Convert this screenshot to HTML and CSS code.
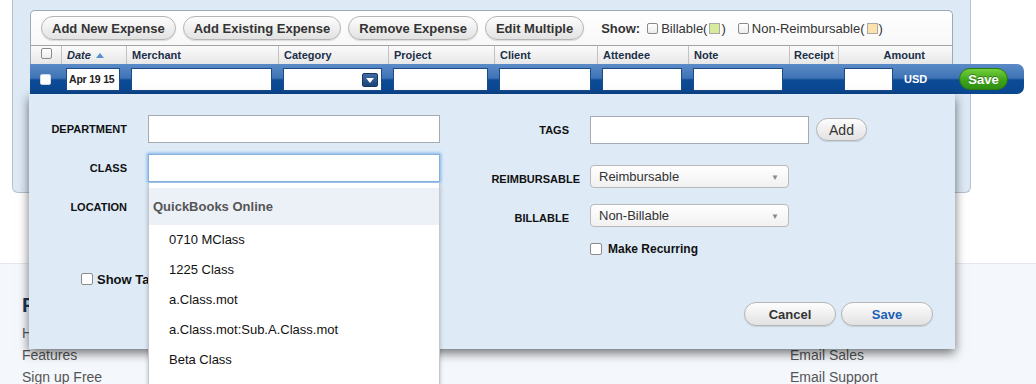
FILE: index.html
```html
<!DOCTYPE html>
<html lang="en">
<head>
  <meta charset="UTF-8">
  <title>Expense Report</title>
  <link rel="stylesheet" href="styles.css">
</head>
<body>

<div class="page">
  <div class="expense-panel">
    <div class="grid-box">
      <div class="toolbar">
        <button class="pill">Add New Expense</button>
        <button class="pill">Add Existing Expense</button>
        <button class="pill">Remove Expense</button>
        <button class="pill">Edit Multiple</button>
        <div class="show-filters">
          <span class="show-label">Show:</span>
          <span class="filter"><span class="cb"></span>Billable(<span class="swatch billable"></span>)</span>
          <span class="filter"><span class="cb"></span>Non-Reimbursable(<span class="swatch non-reimb"></span>)</span>
        </div>
      </div>

      <div class="head-row">
        <div class="hcell check"><span class="cb"></span></div>
        <div class="hcell"><em>Date</em><span class="sort-up"></span></div>
        <div class="hcell">Merchant</div>
        <div class="hcell">Category</div>
        <div class="hcell">Project</div>
        <div class="hcell">Client</div>
        <div class="hcell">Attendee</div>
        <div class="hcell">Note</div>
        <div class="hcell receipt">Receipt</div>
        <div class="hcell amount">Amount</div>
      </div>

      <div class="edit-row">
        <div class="ecell check"><span class="cb white"></span></div>
        <div class="ecell"><span class="row-input date">Apr 19 15</span></div>
        <div class="ecell"><span class="row-input"></span></div>
        <div class="ecell"><span class="row-input select"><span class="drop-btn"></span></span></div>
        <div class="ecell"><span class="row-input"></span></div>
        <div class="ecell"><span class="row-input"></span></div>
        <div class="ecell"><span class="row-input"></span></div>
        <div class="ecell"><span class="row-input"></span></div>
        <div class="ecell"></div>
        <div class="ecell amount-cell"><span class="row-input amount-input"></span><span class="currency">USD</span></div>
        <div class="ecell save-cell"><button class="green-save">Save</button></div>
      </div>
    </div>
  </div>

  <div class="site-footer">
    <div class="footer-col">
      <h3>Find Out More</h3>
      <a href="#">How It Works</a>
      <a href="#">Features</a>
      <a href="#">Sign up Free</a>
    </div>
    <div class="footer-col contact">
      <a href="#">Email Sales</a>
      <a href="#">Email Support</a>
    </div>
  </div>

  <div class="modal">
    <div class="modal-body">
      <div class="form-col left-col">
        <label class="field-label">DEPARTMENT</label>
        <span class="text-input"></span>
        <label class="field-label">CLASS</label>
        <span class="text-input focused"></span>
        <label class="field-label">LOCATION</label>
        <span class="text-input"></span>
        <span class="show-tags"><span class="cb"></span>Show Tags</span>
      </div>

      <div class="form-col right-col">
        <label class="field-label tall">TAGS</label>
        <div class="tag-field">
          <span class="text-input tags"></span>
          <button class="pill add-btn">Add</button>
        </div>
        <label class="field-label low wide">REIMBURSABLE</label>
        <div class="select-box">Reimbursable<span class="caret">&#9660;</span></div>
        <label class="field-label low">BILLABLE</label>
        <div class="select-box">Non-Billable<span class="caret">&#9660;</span></div>
        <span></span>
        <span class="recurring"><span class="cb"></span>Make Recurring</span>
      </div>
    </div>

    <div class="modal-actions">
      <button class="pill wide-btn">Cancel</button>
      <button class="pill wide-btn blue-text">Save</button>
    </div>

    <!-- class suggestions -->
    <div class="suggest">
      <div class="suggest-group">QuickBooks Online</div>
      <div class="suggest-item">0710 MClass</div>
      <div class="suggest-item">1225 Class</div>
      <div class="suggest-item">a.Class.mot</div>
      <div class="suggest-item">a.Class.mot:Sub.A.Class.mot</div>
      <div class="suggest-item">Beta Class</div>
    </div>
  </div>
</div>

</body>
</html>
```

FILE: styles.css
```css
body {
  margin: 0;
  font-family: "Liberation Sans", Arial, sans-serif;
  background: #fff;
  overflow: hidden;
}
.page {
  position: relative;
  height: 384px;
  overflow: hidden;
}

/* top panel */
.expense-panel {
  margin-left: 12px;
  width: 957px;
  height: 182px;
  padding-top: 10px;
  background: #dde9f5;
  border: 1px solid #b3c2d1;
  border-top: none;
  border-radius: 0 0 6px 6px;
}
.grid-box {
  margin-left: 17px;
  width: 921px;
  border: 1px solid #9ea9b5;
  border-bottom: none;
  border-radius: 5px 5px 0 0;
  background: linear-gradient(#ffffff, #ededed);
}
.toolbar {
  display: flex;
  align-items: center;
  height: 34px;
  padding: 0 0 0 10px;
  gap: 7px;
  box-sizing: border-box;
}
.pill {
  height: 24px;
  padding: 0 10px;
  font-family: "Liberation Sans", Arial, sans-serif;
  font-weight: bold;
  font-size: 13px;
  color: #333;
  background: linear-gradient(#fdfdfd, #e2e2e2);
  border: 1px solid #b5b5b5;
  border-radius: 12px;
  box-shadow: 0 1px 1px rgba(0,0,0,0.12);
}
.show-filters {
  display: flex;
  align-items: center;
  margin-left: 10px;
  font-size: 13px;
  color: #333;
}
.show-label {
  font-weight: bold;
  margin-right: 7px;
}
.filter {
  display: flex;
  align-items: center;
  margin-right: 12px;
}
.filter .cb {
  margin-right: 3px;
}
.cb {
  display: inline-block;
  width: 9px;
  height: 9px;
  border: 1px solid #8a8a8a;
  border-radius: 2px;
  background: linear-gradient(#fff, #ececec);
}
.cb.white {
  border-color: #d0d8e2;
  background: #fff;
}
.swatch {
  display: inline-block;
  width: 9px;
  height: 9px;
  margin: 0 1px 0 2px;
  border: 1px solid #a9a9a9;
}
.swatch.billable {
  background: #d6eb9c;
}
.swatch.non-reimb {
  background: #fde2ad;
}

/* column header */
.head-row,
.edit-row {
  display: grid;
}
.head-row {
  grid-template-columns: 30px 65px 152px 110px 106px 103px 91px 101px 49px 114px;
  height: 18px;
  border-top: 1px solid #a3a3a3;
  background: linear-gradient(#fbfbfb, #e7e7e7);
}
.hcell {
  display: flex;
  align-items: center;
  padding-left: 5px;
  border-left: 1px solid #c2c2c2;
  font-size: 11px;
  font-weight: bold;
  color: #1c2f48;
}
.hcell:first-child {
  border-left: none;
}
.hcell.check {
  justify-content: center;
  padding: 0;
  align-items: flex-start;
  padding-top: 2px;
}
.hcell.receipt {
  padding-left: 4px;
}
.hcell.amount {
  justify-content: flex-end;
  padding-right: 27px;
}
.sort-up {
  width: 0;
  height: 0;
  margin-left: 5px;
  border-left: 4px solid transparent;
  border-right: 4px solid transparent;
  border-bottom: 5px solid #5a8fd1;
}

/* editable row */
.edit-row {
  grid-template-columns: 31px 65px 152px 110px 106px 103px 91px 101px 49px 115px 71px;
  width: 994px;
  height: 30px;
  margin-left: -1px;
  background: linear-gradient(#5b8bc7, #3f73b5 47%, #0e4b97 53%, #0a4791);
  border-radius: 0 7px 7px 0;
}
.ecell {
  display: flex;
  align-items: center;
  padding: 0 6px 0 5px;
}
.ecell.check {
  justify-content: center;
  padding: 0;
}
.row-input {
  position: relative;
  display: block;
  width: 100%;
  height: 23px;
  background: #fff;
  border: 1px solid #1b4b88;
  box-sizing: border-box;
}
.row-input.date {
  font-size: 10.5px;
  font-weight: bold;
  color: #222;
  line-height: 21px;
  padding-left: 2px;
  white-space: nowrap;
  letter-spacing: -0.2px;
}
.drop-btn {
  position: absolute;
  right: 3px;
  top: 4px;
  width: 16px;
  height: 14px;
  background: linear-gradient(#3f6aa3, #1c4679);
  border: 1px solid #173a63;
  border-radius: 2px;
  box-sizing: border-box;
}
.drop-btn::after {
  content: "";
  position: absolute;
  left: 3px;
  top: 4px;
  border-left: 4px solid transparent;
  border-right: 4px solid transparent;
  border-top: 5px solid #fff;
}
.amount-cell {
  padding-left: 6px;
}
.amount-input {
  width: 49px;
  flex: none;
}
.currency {
  margin-left: 11px;
  font-size: 11px;
  font-weight: bold;
  color: #fff;
}
.save-cell {
  padding-left: 6px;
}
.green-save {
  width: 49px;
  height: 22px;
  padding: 0;
  font-family: "Liberation Sans", Arial, sans-serif;
  font-size: 13px;
  font-weight: bold;
  color: #fff;
  text-shadow: 0 -1px 0 rgba(0,0,0,0.35);
  background: linear-gradient(#74cf3c, #3ea51a 55%, #2f8f10);
  border: 1px solid #2b7a12;
  border-radius: 11px;
}

/* footer */
.site-footer {
  display: flex;
  margin-top: 70px;
  padding-left: 22px;
  height: 140px;
  border-top: 1px solid #e3e8ee;
  background: #f4f7fb;
}
.footer-col {
  flex: none;
  width: 768px;
}
.footer-col.contact {
  width: 200px;
  padding-top: 80px;
}
.footer-col h3 {
  margin: 29px 0 5px;
  font-size: 20px;
  line-height: 24px;
  color: #1d3652;
}
.footer-col a {
  display: block;
  font-size: 14px;
  line-height: 22px;
  color: #555;
  text-decoration: none;
}

/* modal */
.modal {
  position: absolute;
  left: 29px;
  top: 94px;
  width: 926px;
  height: 255px;
  display: flex;
  flex-direction: column;
  background: #deebf7;
  box-shadow: 0 4px 10px rgba(0,0,0,0.55);
  z-index: 2;
}
.modal-body {
  flex: 1;
  display: flex;
  padding-top: 21px;
}
.form-col {
  display: grid;
  column-gap: 21px;
}
.left-col {
  grid-template-columns: 98px 292px;
  grid-auto-rows: 28px;
  row-gap: 11px;
  align-content: start;
}
.right-col {
  margin-left: 49px;
  grid-template-columns: 80px auto;
  grid-template-rows: 49px 39px 39px auto;
  align-content: start;
  padding-top: 1px;
}
.field-label {
  text-align: right;
  font-size: 11px;
  font-weight: bold;
  color: #111;
  line-height: 28px;
  white-space: nowrap;
}
.field-label.low {
  line-height: 23px;
  padding-top: 3px;
}
.field-label.wide {
  margin-right: -11px;
}
.text-input {
  display: block;
  height: 28px;
  background: #fff;
  border: 1px solid #a4abb3;
  box-sizing: border-box;
}
.text-input.focused {
  border-color: #86b0de;
  box-shadow: 0 0 3px 1px #7fb0e8;
}
.text-input.tags {
  width: 219px;
}
/* label runs under the open dropdown, so it is clipped at its edge */
.show-tags {
  grid-column: 1 / span 2;
  display: flex;
  align-items: center;
  width: 67px;
  margin-top: 39px;
  height: 16px;
  margin-left: 52px;
  overflow: hidden;
  white-space: nowrap;
  font-size: 13px;
  font-weight: bold;
  color: #111;
}
.show-tags .cb,
.recurring .cb {
  flex: none;
  width: 10px;
  height: 10px;
  margin-right: 4px;
  background: #fff;
}
.tag-field {
  display: flex;
  align-items: flex-start;
  gap: 7px;
}
.add-btn {
  width: 51px;
  height: 23px;
  margin-top: 2px;
  padding: 0;
  font-weight: normal;
  font-size: 14px;
}
.select-box {
  position: relative;
  width: 199px;
  height: 23px;
  padding-left: 8px;
  box-sizing: border-box;
  font-size: 13px;
  line-height: 21px;
  color: #333;
  background: linear-gradient(#ffffff, #f1f1f1);
  border: 1px solid #b9b9b9;
  border-radius: 4px;
}
.caret {
  position: absolute;
  right: 9px;
  top: 1px;
  font-size: 8px;
  color: #8a8a8a;
}
.recurring {
  display: flex;
  align-items: center;
  height: 12px;
  font-size: 12px;
  font-weight: bold;
  color: #111;
}
.recurring .cb {
  margin-right: 6px;
}
.modal-actions {
  display: flex;
  justify-content: flex-end;
  gap: 5px;
  padding: 0 22px 23px 0;
}
.wide-btn {
  width: 92px;
}
.blue-text {
  color: #1a5fb8;
}

/* class suggestions dropdown */
.suggest {
  position: absolute;
  left: 119px;
  top: 89px;
  width: 292px;
  height: 201px;
  padding-top: 5px;
  box-sizing: border-box;
  background: #fff;
  border: 1px solid #c4c8cc;
  border-top: none;
  border-bottom: none;
  box-shadow: 0 2px 4px rgba(0,0,0,0.25);
}
.suggest-group {
  height: 37px;
  line-height: 37px;
  padding-left: 4px;
  background: #ecf1f8;
  font-size: 13px;
  font-weight: bold;
  color: #555;
}
.suggest-item {
  height: 30px;
  line-height: 30px;
  padding-left: 20px;
  font-size: 13px;
  color: #111;
}
```
